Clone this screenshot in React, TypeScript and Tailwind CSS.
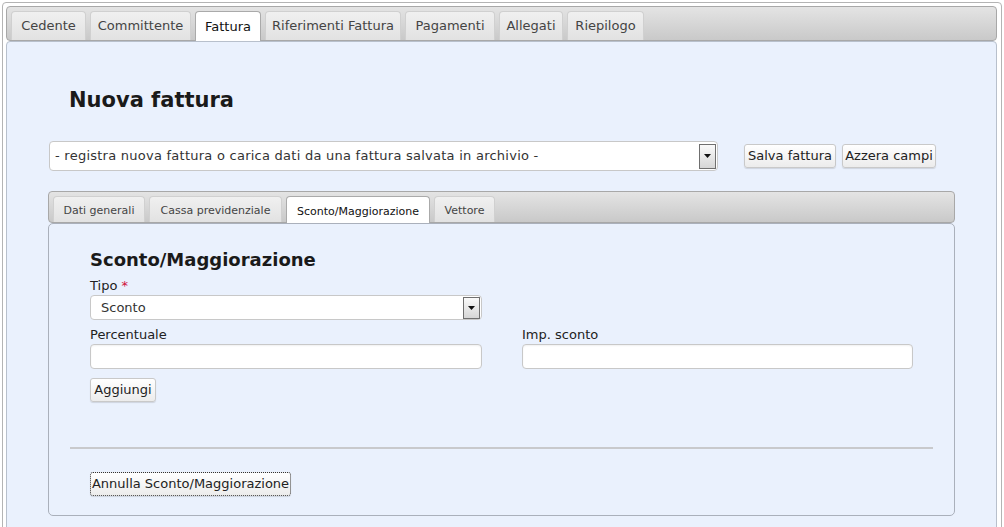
import React from 'react';

const font = "font-['DejaVu_Sans','Verdana',sans-serif]";

function Arrow() {
  return (
    <span className="w-[17px] h-full border border-[#6f6f6f] bg-gradient-to-b from-[#fafafa] to-[#d6d6d6] flex items-center justify-center">
      <svg width="7" height="4" viewBox="0 0 7 4">
        <path d="M0 0h7L3.5 4z" fill="#111" />
      </svg>
    </span>
  );
}

function Btn({ label, w, focus }: { label: string; w: string; focus?: boolean }) {
  return (
    <button
      className={`${w} h-[24px] rounded-[3px] border ${focus ? 'border-dotted border-[#333]' : 'border-[#c9c9c9]'} bg-gradient-to-b from-white to-[#ececec] shadow-[0_1px_1px_rgba(0,0,0,0.12)] text-[13px] text-[#222] flex items-center justify-center`}
    >
      {label}
    </button>
  );
}

export default function App() {
  const topTabs = [
    { name: 'Cedente', w: 'w-[75px]' },
    { name: 'Committente', w: 'w-[101px]' },
    { name: 'Fattura', w: 'w-[66px]', active: true },
    { name: 'Riferimenti Fattura', w: 'w-[136px]' },
    { name: 'Pagamenti', w: 'w-[90px]' },
    { name: 'Allegati', w: 'w-[64px]' },
    { name: 'Riepilogo', w: 'w-[77px]' },
  ];
  const subTabs = [
    { name: 'Dati generali', w: 'w-[92px]' },
    { name: 'Cassa previdenziale', w: 'w-[133px]' },
    { name: 'Sconto/Maggiorazione', w: 'w-[144px]', active: true },
    { name: 'Vettore', w: 'w-[61px]' },
  ];

  return (
    <div className={`w-[1004px] h-[527px] overflow-hidden bg-white ${font} text-[#222]`}>
      <div className="ml-[2px] mt-[2px] w-[1000px] h-[540px] border border-[#b4b4b4] rounded-[4px] p-[3px]">
        {/* top tab bar */}
        <div className="h-[35px] w-[991px] border border-[#a8a8a8] rounded-[4px] bg-gradient-to-b from-[#e4e4e4] to-[#c9c9c9] flex items-end gap-[4px] pl-[4px]">
          {topTabs.map((t) => (
            <div
              key={t.name}
              className={`${t.w} ${t.active ? 'h-[30px] bg-white border-[#aaa] text-[#111] -mb-[1px]' : 'h-[29px] bg-gradient-to-b from-[#f0f0f0] to-[#e2e2e2] border-[#d0d0d0] text-[#444]'} border border-b-0 rounded-t-[4px] flex items-center justify-center text-[13px]`}
            >
              {t.name}
            </div>
          ))}
        </div>

        {/* main panel */}
        <div className="w-[991px] h-[500px] border border-[#b8c0cc] rounded-[4px] bg-[#eaf1fd] pl-[42px] pr-[40px] pt-[44px]">
          <h1 className="pl-[20px] text-[21px] font-bold text-[#1a1a1a] leading-[28px]">Nuova fattura</h1>

          <div className="mt-[27px] flex items-start">
            <div className="w-[669px] h-[30px] bg-white border border-[#c8c8c8] rounded-[4px] flex items-center pl-[5px] pr-[1px] py-[1px]">
              <span className="flex-1 text-[13px] text-[#333] tracking-[0.25px]">
                - registra nuova fattura o carica dati da una fattura salvata in archivio -
              </span>
              <span className="h-[25px] flex"><Arrow /></span>
            </div>
            <div className="ml-[26px] mt-[3px] flex gap-[6px]">
              <Btn label="Salva fattura" w="w-[92px]" />
              <Btn label="Azzera campi" w="w-[94px]" />
            </div>
          </div>

          {/* inner tabs */}
          <div className="mt-[20px] w-[907px] -ml-[1px]">
            <div className="h-[32px] border border-[#a8a8a8] rounded-[4px] bg-gradient-to-b from-[#e4e4e4] to-[#c9c9c9] flex items-end gap-[4px] pl-[4px]">
              {subTabs.map((t) => (
                <div
                  key={t.name}
                  className={`${t.w} ${t.active ? 'h-[27px] bg-white border-[#aaa] text-[#111] -mb-[1px]' : 'h-[26px] bg-gradient-to-b from-[#f0f0f0] to-[#e2e2e2] border-[#d0d0d0] text-[#444]'} border border-b-0 rounded-t-[4px] flex items-center justify-center text-[11px] pt-[4px]`}
                >
                  {t.name}
                </div>
              ))}
            </div>
            <div className="h-[293px] border border-[#aab0bb] rounded-[5px] bg-[#eaf1fd] px-[21px] pt-[24px]">
              <div className="pl-[20px]">
                <h2 className="text-[18px] font-bold text-[#1a1a1a] leading-[24px]">Sconto/Maggiorazione</h2>
                <div className="mt-[5px] text-[13px] leading-[17px]">
                  Tipo <span className="text-[#d0103a]">*</span>
                </div>
                <div className="mt-[1px] w-[392px] h-[25px] bg-white border border-[#c8c8c8] rounded-[4px] flex items-center pl-[10px] pr-[1px] py-[1px]">
                  <span className="flex-1 text-[13px] text-[#333]">Sconto</span>
                  <span className="h-[22px] flex"><Arrow /></span>
                </div>
                <div className="mt-[6px] flex gap-[40px]">
                  <div>
                    <div className="text-[13px] leading-[17px]">Percentuale</div>
                    <div className="mt-[1px] w-[392px] h-[25px] bg-white border border-[#c8c8c8] rounded-[4px] shadow-[inset_0_1px_2px_rgba(0,0,0,0.06)]" />
                  </div>
                  <div>
                    <div className="text-[13px] leading-[17px]">Imp. sconto</div>
                    <div className="mt-[1px] w-[391px] h-[25px] bg-white border border-[#c8c8c8] rounded-[4px] shadow-[inset_0_1px_2px_rgba(0,0,0,0.06)]" />
                  </div>
                </div>
                <div className="mt-[9px]">
                  <Btn label="Aggiungi" w="w-[66px]" />
                </div>
              </div>
              <div className="mt-[45px] h-[2px] bg-[#c8c9cc]" />
              <div className="mt-[23px] pl-[20px]">
                <Btn label="Annulla Sconto/Maggiorazione" w="w-[201px]" focus />
              </div>
            </div>
          </div>
        </div>
      </div>
    </div>
  );
}
